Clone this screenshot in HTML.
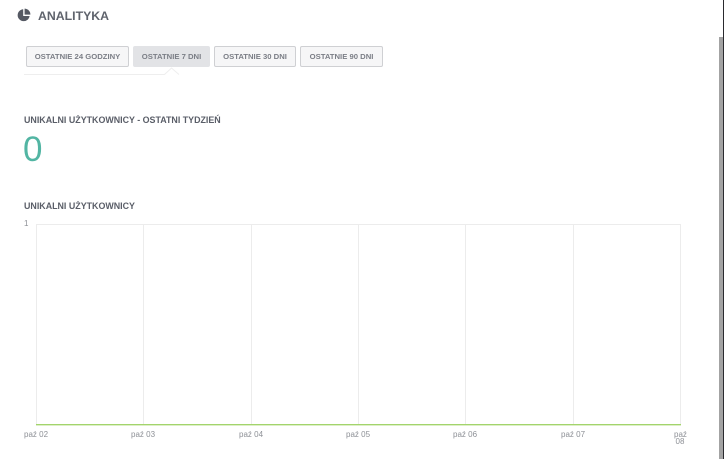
<!DOCTYPE html>
<html lang="pl">
<head>
<meta charset="utf-8">
<title>Analityka</title>
<style>
html,body{margin:0;padding:0;background:#fff;}
body{width:724px;height:459px;position:relative;overflow:hidden;font-family:"Liberation Sans",sans-serif;}
.a{position:absolute;white-space:nowrap;}
.btn{position:absolute;top:46px;height:21px;box-sizing:border-box;border:1px solid #cfd0d3;border-radius:2px;background:#f6f6f7;color:#7b7e86;font-size:7.7px;font-weight:bold;line-height:19px;text-align:center;white-space:nowrap;}
.btn.on{background:#e2e3e6;border-color:#e2e3e6;}
.h{color:#5a5e68;font-size:8.9px;font-weight:bold;}
.t{color:#8d9096;font-size:8px;line-height:7px;}
.v{position:absolute;top:224px;width:1px;height:201px;background:#ececec;}
</style>
</head>
<body>
<svg class="a" style="left:17px;top:8px" width="14" height="14" viewBox="0 0 14 14">
<path d="M6.2 1.2A6 6 0 1 0 12.6 8H6.2Z" fill="#555963"/>
<path d="M7.6 0.6A6 6 0 0 1 13.4 6.6H7.6Z" fill="#555963"/>
</svg>
<div class="a" style="left:38px;top:9px;color:#5f636c;font-size:12.3px;font-weight:bold;line-height:14px;">ANALITYKA</div>

<div class="btn" style="left:26px;width:103px;">OSTATNIE 24 GODZINY</div>
<div class="btn on" style="left:133px;width:77px;">OSTATNIE 7 DNI</div>
<div class="btn" style="left:214px;width:82px;">OSTATNIE 30 DNI</div>
<div class="btn" style="left:300px;width:83px;">OSTATNIE 90 DNI</div>

<svg class="a" style="left:24px;top:67px" width="160" height="9" viewBox="0 0 160 9">
<path d="M0 7.5H140.5L147.5 1L155 7.5" fill="none" stroke="#eeeeee" stroke-width="1"/>
</svg>

<div class="a h" style="left:24px;top:115px;line-height:11px;">UNIKALNI UŻYTKOWNICY - OSTATNI TYDZIEŃ</div>
<div class="a" style="left:23px;top:132px;color:#52b5a3;font-size:35px;line-height:36px;">0</div>
<div class="a h" style="left:24px;top:201px;line-height:11px;">UNIKALNI UŻYTKOWNICY</div>

<div class="a t" style="left:24px;top:220px;">1</div>
<div class="a" style="left:36px;top:224px;width:645px;height:1px;background:#ececec;"></div>
<div class="v" style="left:36px"></div>
<div class="v" style="left:143px"></div>
<div class="v" style="left:251px"></div>
<div class="v" style="left:358px"></div>
<div class="v" style="left:465px"></div>
<div class="v" style="left:573px"></div>
<div class="v" style="left:680px"></div>
<div class="a" style="left:36px;top:424px;width:645px;height:1px;background:#a3d46c;"></div>
<div class="a" style="left:36px;top:425px;width:645px;height:1px;background:#dcefc6;"></div>

<div class="a t" style="left:24px;top:431px;">paź 02</div>
<div class="a t" style="left:131px;top:431px;">paź 03</div>
<div class="a t" style="left:239px;top:431px;">paź 04</div>
<div class="a t" style="left:346px;top:431px;">paź 05</div>
<div class="a t" style="left:453px;top:431px;">paź 06</div>
<div class="a t" style="left:561px;top:431px;">paź 07</div>
<div class="a t" style="left:674px;top:431px;text-align:center;width:12px;">paź<br>08</div>

<div class="a" style="left:719px;top:37px;width:4px;height:422px;background:#a3a3a3;"></div>
<div class="a" style="left:723px;top:0;width:1px;height:459px;background:#2a2a2e;"></div>
</body>
</html>
